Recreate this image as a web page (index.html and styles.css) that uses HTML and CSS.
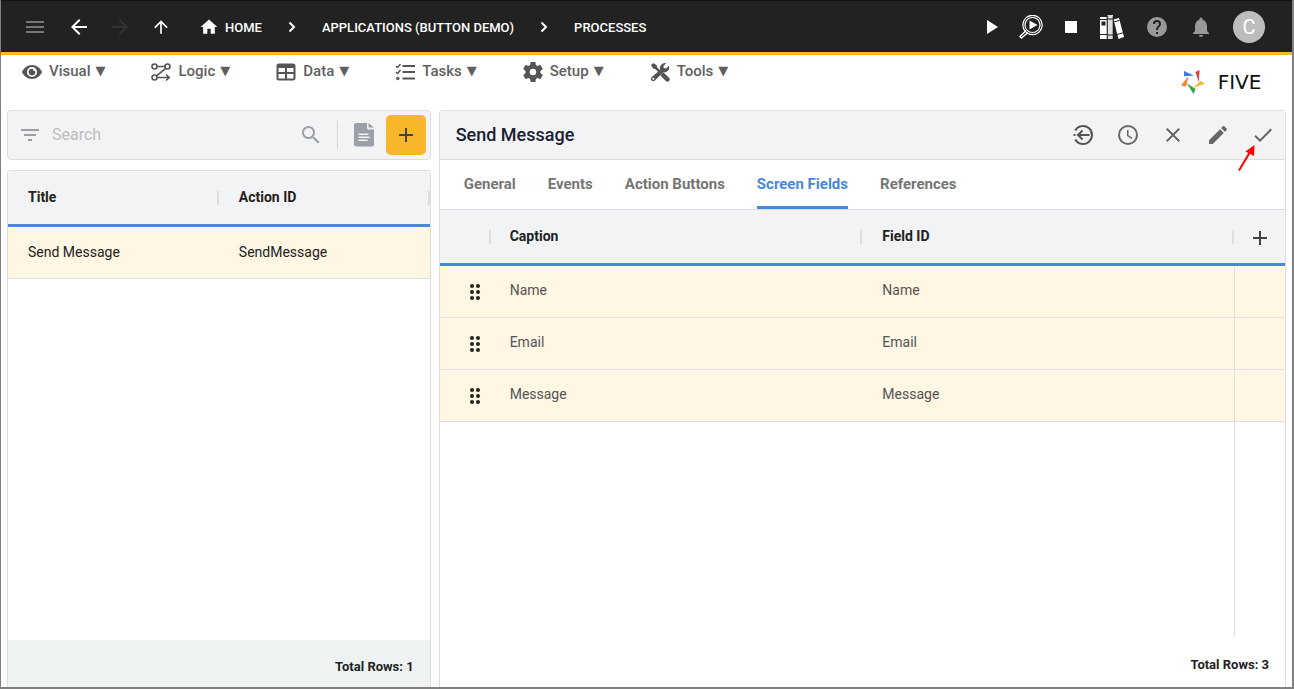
FILE: index.html
```html
<!DOCTYPE html>
<html lang="en">
<head>
  <meta charset="UTF-8" />
  <meta name="viewport" content="width=device-width, initial-scale=1.0">
  <title>Five - Processes</title>
  <link rel="stylesheet" href="styles.css">
</head>
<body>
  <header class="top-bar">
    <button class="icon-button menu-toggle" aria-label="Menu">
      <svg width="24" height="24" viewBox="0 0 24 24"><path d="M3 18h18v-2H3v2zm0-5h18v-2H3v2zm0-7v2h18V6H3z"/></svg>
    </button>
    <button class="icon-button" aria-label="Back">
      <svg width="24" height="24" viewBox="0 0 24 24"><path d="M20 11H7.8l5.6-5.6L12 4l-8 8 8 8 1.4-1.4L7.8 13H20z"/></svg>
    </button>
    <button class="icon-button forward" aria-label="Forward">
      <svg width="24" height="24" viewBox="0 0 24 24"><path d="M4 13h12.200l-5.600 5.600L12 20l8-8-8-8-1.400 1.400 5.600 5.600H4z"/></svg>
    </button>
    <button class="icon-button" aria-label="Up">
      <svg width="20" height="20" viewBox="0 0 24 24"><path d="M13 20V7.800l5.600 5.600L20 12l-8-8-8 8 1.400 1.400L11 7.800V20z"/></svg>
    </button>
    <nav class="breadcrumb">
      <a href="#" class="home">
        <svg width="20" height="20" viewBox="0 0 24 24"><path d="M10 20v-6h4v6h5v-8h3L12 3 2 12h3v8z"/></svg>
        HOME
      </a>
      <svg class="line" width="24" height="24" viewBox="0 0 24 24"><path d="m9.500 7.500 4.500 4.500-4.500 4.500" stroke-width="2"/></svg>
      <a href="#">APPLICATIONS (BUTTON DEMO)</a>
      <svg class="line" width="24" height="24" viewBox="0 0 24 24"><path d="m9.500 7.500 4.500 4.500-4.500 4.500" stroke-width="2"/></svg>
      <a href="#">PROCESSES</a>
    </nav>
    <div class="top-actions">
      <button class="icon-button narrow" aria-label="Run">
        <svg width="16" height="16" viewBox="0 0 16 16"><path d="M4 1v14l11-7z"/></svg>
      </button>
      <button class="icon-button" aria-label="Debug">
        <svg class="line" width="24" height="24" viewBox="0 0 24 24">
          <circle cx="13.500" cy="10" r="9.700" stroke-width="1.200"/>
          <circle cx="13.500" cy="10" r="7.500" stroke-width="1.200"/>
          <path d="M7 15.500 1 21.500l1.500 1.500L9 17.500" stroke-width="1.400"/>
          <path d="M10.500 5.500v9l8-4.500z" fill="#fff" stroke="none"/>
        </svg>
      </button>
      <button class="icon-button narrow" aria-label="Stop">
        <svg width="16" height="16" viewBox="0 0 16 16"><path d="M2 2h12v12H2z"/></svg>
      </button>
      <button class="icon-button books" aria-label="Documentation">
        <svg width="26" height="26" viewBox="0 0 26 26">
          <path d="M1 3h7v22H1z"/>
          <path d="M8.500 1h5.500v24H8.500z" fill="#ddd"/>
          <path d="m14.500 5.500 5.500-1.500 5 19-5.500 2z"/>
          <path d="M2.500 7.500h4v4h-4z" fill="#222"/>
          <path d="M1 5.500h7M1 20.500h7M8 5h6M8 21h6M14.500 8l6-1.700M18 20.500l6-1.700M8.200 2v23M14.200 2v23" stroke="#222" stroke-width="1"/>
        </svg>
      </button>
      <button class="icon-button dim" aria-label="Help">
        <svg width="24" height="24" viewBox="0 0 24 24"><path d="M12 2a10 10 0 1 0 0 20 10 10 0 0 0 0-20zm1 17h-2v-2h2v2zm2.070-7.750-.9.920C13.450 12.900 13 13.500 13 15h-2v-.5c0-1.100.45-2.100 1.170-2.830l1.240-1.260c.37-.36.590-.86.590-1.410a2 2 0 0 0-4 0H8a4 4 0 0 1 8 0c0 .88-.36 1.680-.93 2.250z"/></svg>
      </button>
      <button class="icon-button dim" aria-label="Notifications">
        <svg width="24" height="24" viewBox="0 0 24 24"><path d="M12 22c1.100 0 2-.9 2-2h-4a2 2 0 0 0 2 2zm6-6v-5c0-3.070-1.640-5.640-4.500-6.320V4a1.500 1.500 0 0 0-3 0v.68C7.630 5.360 6 7.920 6 11v5l-2 2v1h16v-1z"/></svg>
      </button>
      <button class="avatar">C</button>
    </div>
  </header>

  <div class="menu-row">
    <nav class="menu">
      <button>
        <svg width="20" height="20" viewBox="0 0 20 20"><path d="M10 3C5.500 3 1.700 5.900 0 10c1.700 4.100 5.500 7 10 7s8.300-2.900 10-7c-1.700-4.100-5.500-7-10-7zm0 12a5 5 0 1 1 0-10 5 5 0 0 1 0 10z"/><path d="M10 6.700a3.300 3.300 0 1 0 3.300 3.300c0-.4 0-.7-.2-1.100A1.800 1.800 0 0 1 11 7a3 3 0 0 0-1-.3z"/></svg>
        Visual <span class="caret">▼</span>
      </button>
      <button>
        <svg class="line" width="20" height="20" viewBox="0 0 20 20" stroke-width="1.600">
          <circle cx="3.500" cy="4.500" r="2.500"/><circle cx="16.500" cy="4.500" r="2.500"/><circle cx="3.500" cy="15.500" r="2.500"/>
          <path d="M6 4.500h8M14.700 6.300 5.500 13.800M6 15.500h12M15 12.500l3.200 3-3.200 3"/>
        </svg>
        Logic <span class="caret">▼</span>
      </button>
      <button>
        <svg width="20" height="20" viewBox="0 0 20 20"><path fill-rule="evenodd" d="M3 1.500h14a2.500 2.500 0 0 1 2.500 2.500v12a2.500 2.500 0 0 1-2.500 2.500H3A2.500 2.500 0 0 1 .5 16V4A2.500 2.500 0 0 1 3 1.500zM2.500 6v4H9V6zM11 6v4h6.500V6zM2.500 12v4.500H9V12zm8.500 0v4.500h6.500V12z"/></svg>
        Data <span class="caret">▼</span>
      </button>
      <button>
        <svg class="line" width="20" height="20" viewBox="0 0 20 20" stroke-width="1.500"><path d="m1 4 1.500 1.500L5.500 2M1 10l1.500 1.500L5.500 8"/><path d="M7.500 4H20M7.500 10H20M7.500 16.500H20" stroke-width="2"/><circle cx="2.800" cy="16.500" r="1" /></svg>
        Tasks <span class="caret">▼</span>
      </button>
      <button>
        <svg width="20" height="20" viewBox="2 2 20 20"><path d="M19.430 12.980c.04-.32.070-.64.070-.98s-.03-.66-.07-.98l2.110-1.650c.19-.15.240-.42.120-.64l-2-3.460c-.12-.22-.39-.3-.61-.22l-2.490 1c-.52-.4-1.080-.73-1.690-.98l-.38-2.650A.49.490 0 0 0 14 2h-4c-.25 0-.46.180-.49.420l-.38 2.650c-.61.250-1.170.59-1.690.98l-2.490-1c-.23-.09-.49 0-.61.220l-2 3.460c-.13.220-.07.490.120.64l2.110 1.650c-.04.320-.07.650-.07.980s.03.660.070.980l-2.110 1.650c-.19.150-.24.420-.12.640l2 3.460c.12.220.39.300.61.220l2.490-1c.52.400 1.080.73 1.690.98l.38 2.650c.03.240.24.420.49.420h4c.25 0 .46-.18.490-.42l.38-2.650c.61-.25 1.170-.59 1.690-.98l2.490 1c.23.090.49 0 .61-.22l2-3.460c.12-.22.070-.49-.12-.64zM12 15.200a3.200 3.200 0 1 1 0-6.400 3.200 3.200 0 0 1 0 6.400z"/></svg>
        Setup <span class="caret">▼</span>
      </button>
      <button>
        <svg width="20" height="20" viewBox="0 0 20 20"><path d="M1 3.200 3.200 1l3.600 2.300.3 2 4 4-1.800 1.800-4-4-2-.3z"/><path d="m12 11.500 1.500-1 5.500 5.200a2.200 2.200 0 0 1-3.200 3.200l-5.300-5.400z"/><path d="M18.800 3.800 16 6.500l-2.200-.4-.4-2.200 2.800-2.700a5 5 0 0 0-6 6.500L1.600 15.200a2.300 2.300 0 0 0 3.300 3.300l8.100-8.100a5 5 0 0 0 5.800-6.600zM3.300 17.700a1 1 0 1 1 0-2 1 1 0 0 1 0 2z"/></svg>
        Tools <span class="caret">▼</span>
      </button>
    </nav>
    <div class="logo">
      <svg width="24" height="24" viewBox="0 0 24 24">
        <path fill="#3f7fd6" d="M3 1v5.200l10-.7z"/>
        <path fill="#e8383b" d="M18.500 0 14.500 2l3.300 10z"/>
        <path fill="#f5b82e" d="M24 13.800 19.500 10.700 12 18z"/>
        <path fill="#35a550" d="M12.500 24 14.500 19 5.500 13z"/>
        <path fill="#f58232" d="M0 15.500 5 16.500 7.500 6z"/>
      </svg>
      <span class="logo-text">FIVE</span>
    </div>
  </div>

  <main>
    <section class="list">
      <div class="search-bar">
        <button class="icon-button" aria-label="Filter">
          <svg width="24" height="24" viewBox="0 0 24 24"><path d="M10 18h4v-2h-4v2zM3 6v2h18V6H3zm3 7h12v-2H6v2z"/></svg>
        </button>
        <input type="text" placeholder="Search" aria-label="Search">
        <button class="icon-button" aria-label="Find">
          <svg width="24" height="24" viewBox="0 0 24 24"><path d="M15.500 14h-.79l-.28-.27A6.500 6.500 0 1 0 13.730 14.430l.27.280v.79l5 4.990L20.490 19zm-6 0a4.500 4.500 0 1 1 0-9 4.500 4.500 0 0 1 0 9z"/></svg>
        </button>
        <span class="separator"></span>
        <button class="icon-button" aria-label="Report">
          <svg width="24" height="24" viewBox="0 0 24 24"><path fill-rule="evenodd" d="M4.500 0H15v5a1.500 1.500 0 0 0 1.500 1.500H22v15a2 2 0 0 1-2 2H4.500a2.500 2.500 0 0 1-2.500-2.500V2.500A2.500 2.500 0 0 1 4.500 0zM6.500 10.500V12h10v-1.500zm0 3V15h11v-1.500zm0 3V18h9v-1.500z"/><path d="M16.500 0v4.500H22z"/></svg>
        </button>
        <button class="add-button" aria-label="Add">
          <svg width="24" height="24" viewBox="0 0 24 24"><path d="M19 13h-6v6h-2v-6H5v-2h6V5h2v6h6z"/></svg>
        </button>
      </div>

      <div class="panel">
        <table>
          <thead>
            <tr><th>Title</th><th>Action ID</th></tr>
          </thead>
          <tbody>
            <tr><td>Send Message</td><td>SendMessage</td></tr>
          </tbody>
        </table>
        <div class="blank"></div>
        <div class="total shaded">Total Rows: 1</div>
      </div>
    </section>

    <section class="panel detail">
      <div class="detail-header">
        <h1>Send Message</h1>
        <div class="detail-actions">
          <button class="icon-button dark" aria-label="Exit">
            <svg class="line" width="24" height="24" viewBox="0 0 24 24" stroke-width="2"><path d="M4.200 7.500a9 9 0 1 1 0 9M18.500 12H7M11.500 7.500 7 12l4.500 4.500M2.500 12h2"/></svg>
          </button>
          <button class="icon-button" aria-label="History">
            <svg width="24" height="24" viewBox="0 0 24 24"><path d="M12 2a10 10 0 1 0 0 20 10 10 0 0 0 0-20zm0 18a8 8 0 1 1 0-16 8 8 0 0 1 0 16zm.5-13H11v6l4.700 3 .8-1.300-4-2.500z"/></svg>
          </button>
          <button class="icon-button" aria-label="Cancel">
            <svg width="24" height="24" viewBox="0 0 24 24"><path d="M19 6.410 17.590 5 12 10.590 6.410 5 5 6.410 10.590 12 5 17.590 6.410 19 12 13.410 17.590 19 19 17.590 13.410 12z"/></svg>
          </button>
          <button class="icon-button" aria-label="Edit">
            <svg width="24" height="24" viewBox="0 0 24 24"><path d="M3 17.250V21h3.750L17.810 9.940l-3.750-3.750zM20.710 7.040a1 1 0 0 0 0-1.410l-2.340-2.340a1 1 0 0 0-1.410 0l-1.830 1.830 3.750 3.750z"/></svg>
          </button>
          <button class="icon-button save" aria-label="Save">
            <svg width="24" height="24" viewBox="0 0 24 24"><path d="M9 16.200 4.800 12l-1.400 1.400L9 19 21 7l-1.400-1.400z"/></svg>
            <svg class="pointer" width="18" height="28" viewBox="0 0 18 28"><path d="M1 26.500 12 8" stroke="#f00" stroke-width="2"/><path d="M16.500 1 7.500 7.500l8.500 4.500z" fill="#f00"/></svg>
          </button>
        </div>
      </div>

      <nav class="tabs">
        <a href="#">General</a>
        <a href="#">Events</a>
        <a href="#">Action Buttons</a>
        <a href="#" class="active">Screen Fields</a>
        <a href="#">References</a>
      </nav>

      <table class="fields">
        <colgroup>
          <col class="col-drag"><col><col><col class="col-add">
        </colgroup>
        <thead>
          <tr>
            <th></th>
            <th>Caption</th>
            <th>Field ID</th>
            <th>
              <button class="icon-button" aria-label="Add field">
                <svg width="24" height="24" viewBox="0 0 24 24"><path d="M19 13h-6v6h-2v-6H5v-2h6V5h2v6h6z"/></svg>
              </button>
            </th>
          </tr>
        </thead>
        <tbody>
          <tr>
            <td><svg class="grip" width="10" height="16" viewBox="0 0 10 16"><path d="M2 2h0M8 2h0M2 8h0M8 8h0M2 14h0M8 14h0"/></svg></td>
            <td>Name</td><td>Name</td><td></td>
          </tr>
          <tr>
            <td><svg class="grip" width="10" height="16" viewBox="0 0 10 16"><path d="M2 2h0M8 2h0M2 8h0M8 8h0M2 14h0M8 14h0"/></svg></td>
            <td>Email</td><td>Email</td><td></td>
          </tr>
          <tr>
            <td><svg class="grip" width="10" height="16" viewBox="0 0 10 16"><path d="M2 2h0M8 2h0M2 8h0M8 8h0M2 14h0M8 14h0"/></svg></td>
            <td>Message</td><td>Message</td><td></td>
          </tr>
        </tbody>
      </table>
      <div class="blank with-line"></div>
      <div class="total">Total Rows: 3</div>
    </section>
  </main>
</body>
</html>
```
FILE: styles.css
```css
* {
  box-sizing: border-box;
}
body {
  font-family: Roboto, "Liberation Sans", sans-serif;
  font-size: 14px;
  color: #222;
  background-color: #fff;
  margin: 0;
  height: 100vh;
  display: flex;
  flex-direction: column;
  border: solid #808080;
  border-width: 0 2px 2px 1px;
}
button {
  font-family: inherit;
  border: none;
  background: none;
  padding: 0;
  cursor: pointer;
}
a {
  color: inherit;
  text-decoration: none;
}
svg {
  display: block;
  fill: currentColor;
  flex-shrink: 0;
}
.line {
  fill: none;
  stroke: currentColor;
}
.icon-button {
  display: flex;
  align-items: center;
  justify-content: center;
  width: 24px;
  height: 24px;
  color: inherit;
}

/* top bar */
.top-bar {
  display: flex;
  align-items: center;
  gap: 17px;
  height: 55px;
  flex-shrink: 0;
  padding: 1px 27px 0 22px;
  background-color: #222;
  color: #fff;
  border-top: 1px solid #111;
  border-bottom: 3px solid #f8b62b;
}
.top-bar .menu-toggle {
  color: #777;
  margin-right: 3px;
}
.top-bar .forward {
  color: #333;
}
.breadcrumb {
  display: flex;
  align-items: center;
  gap: 18px;
  margin-left: 9px;
  font-size: 13px;
  font-weight: 500;
  white-space: nowrap;
}
.home {
  display: flex;
  align-items: center;
  gap: 6px;
}
.top-actions {
  display: flex;
  align-items: center;
  gap: 20px;
  margin-left: auto;
}
.narrow {
  width: 16px;
}
.books {
  width: 26px;
}
.dim {
  color: #999;
}
.avatar {
  width: 32px;
  height: 32px;
  border-radius: 50%;
  background-color: #bdbdbd;
  color: #fff;
  font-size: 20px;
}

/* menu */
.menu-row {
  display: flex;
  justify-content: space-between;
  height: 55px;
  flex-shrink: 0;
  padding: 6px 23px 0 21px;
}
.menu {
  display: flex;
  align-items: flex-start;
  gap: 46px;
}
.menu button {
  display: flex;
  align-items: center;
  gap: 7px;
  height: 22px;
  font-size: 15px;
  line-height: 20px;
  padding-bottom: 2px;
  font-weight: 500;
  color: #5f5f5f;
}
.menu svg {
  margin-top: 1px;
  color: #555;
}
.caret {
  font-family: "DejaVu Sans", sans-serif;
  font-size: 13px;
  margin-left: -2px;
}
.logo {
  display: flex;
  align-items: center;
  gap: 5px;
  height: 42px;
}
.logo-text {
  width: 59px;
  font-family: "DejaVu Sans", sans-serif;
  font-size: 20px;
  text-align: center;
  color: #111;
}

/* layout */
main {
  display: grid;
  grid-template-columns: 1fr 2fr;
  gap: 8px;
  flex: 1;
  min-height: 0;
  padding: 0 6px;
}
.list {
  display: flex;
  flex-direction: column;
  gap: 10px;
}
.search-bar {
  display: flex;
  align-items: center;
  height: 50px;
  padding: 0 4px 0 10px;
  background-color: #f1f3f4;
  border: 1px solid #ddd;
  border-radius: 4px;
  color: #9aa0a6;
}
.search-bar input {
  flex: 1;
  min-width: 0;
  border: none;
  outline: none;
  background: none;
  padding: 0 10px 2px;
  font-family: inherit;
  font-size: 16px;
}
.search-bar input::placeholder {
  color: #bdbdbd;
}
.separator {
  width: 1px;
  height: 28px;
  margin: 0 14px;
  background-color: #d5d5d5;
}
.add-button {
  display: flex;
  align-items: center;
  justify-content: center;
  width: 40px;
  height: 40px;
  margin-left: 10px;
  border-radius: 5px;
  background-color: #f8b62b;
  color: #444;
}
.panel {
  display: flex;
  flex-direction: column;
  flex: 1;
  min-width: 0;
  border: 1px solid #ddd;
  border-bottom: none;
  border-radius: 4px 4px 0 0;
}

/* tables */
table {
  width: 100%;
  table-layout: fixed;
  border-collapse: separate;
  border-spacing: 0;
}
th {
  height: 56px;
  padding: 0 0 2px 20px;
  text-align: left;
  font-weight: 700;
  background: linear-gradient(#ddd, #ddd) no-repeat right center / 2px 14px #f1f3f4;
  border-bottom: 3px solid #4788d8;
}
td {
  height: 52px;
  padding: 0 0 2px 20px;
  background-color: #fff6e3;
  border-bottom: 1px solid #e0e0e0;
}
.col-drag {
  width: 51px;
}
.col-add {
  width: 51px;
}
.fields th:last-child {
  padding: 2px 0 0 14px;
  background: #f1f3f4;
  color: #444;
}
.fields td {
  padding-bottom: 4px;
  color: #555;
}
.fields td:first-child {
  padding: 0 0 0 30px;
}
.fields td:last-child {
  border-left: 1px solid #e0e0e0;
}
.fields th:nth-child(2),
.fields td:nth-child(2) {
  padding-left: 19px;
}
.grip {
  stroke: #222;
  stroke-width: 4;
  stroke-linecap: round;
}
.blank {
  flex: 1;
}
.with-line {
  width: 51px;
  margin-left: auto;
  border-left: 1px solid #e0e0e0;
}
.total {
  height: 50px;
  padding: 20px 16px 0;
  line-height: 16px;
  font-size: 13px;
  font-weight: 700;
  text-align: right;
}
.shaded {
  height: 47px;
  padding-top: 19px;
  background-color: #eef2f3;
}

/* detail */
.detail-header {
  display: flex;
  align-items: center;
  justify-content: space-between;
  height: 49px;
  padding: 0 10px 0 16px;
  background-color: #f1f3f4;
  border-bottom: 1px solid #ddd;
}
h1 {
  margin: 0;
  padding-bottom: 2px;
  font-size: 18px;
  font-weight: 500;
  color: #1a2033;
}
.detail-actions {
  display: flex;
  gap: 21px;
  color: #666;
}
.dark {
  color: #555;
}
.save {
  position: relative;
}
.pointer {
  position: absolute;
  top: 21px;
  left: -13px;
}
.tabs {
  display: flex;
  gap: 32px;
  height: 50px;
  padding: 0 24px;
  border-bottom: 1px solid #ddd;
  font-size: 15px;
  font-weight: 700;
  line-height: 48px;
  color: #757575;
}
.active {
  color: #4788d8;
  background: linear-gradient(#4788d8, #4788d8) no-repeat bottom / 100% 3px;
}
```
